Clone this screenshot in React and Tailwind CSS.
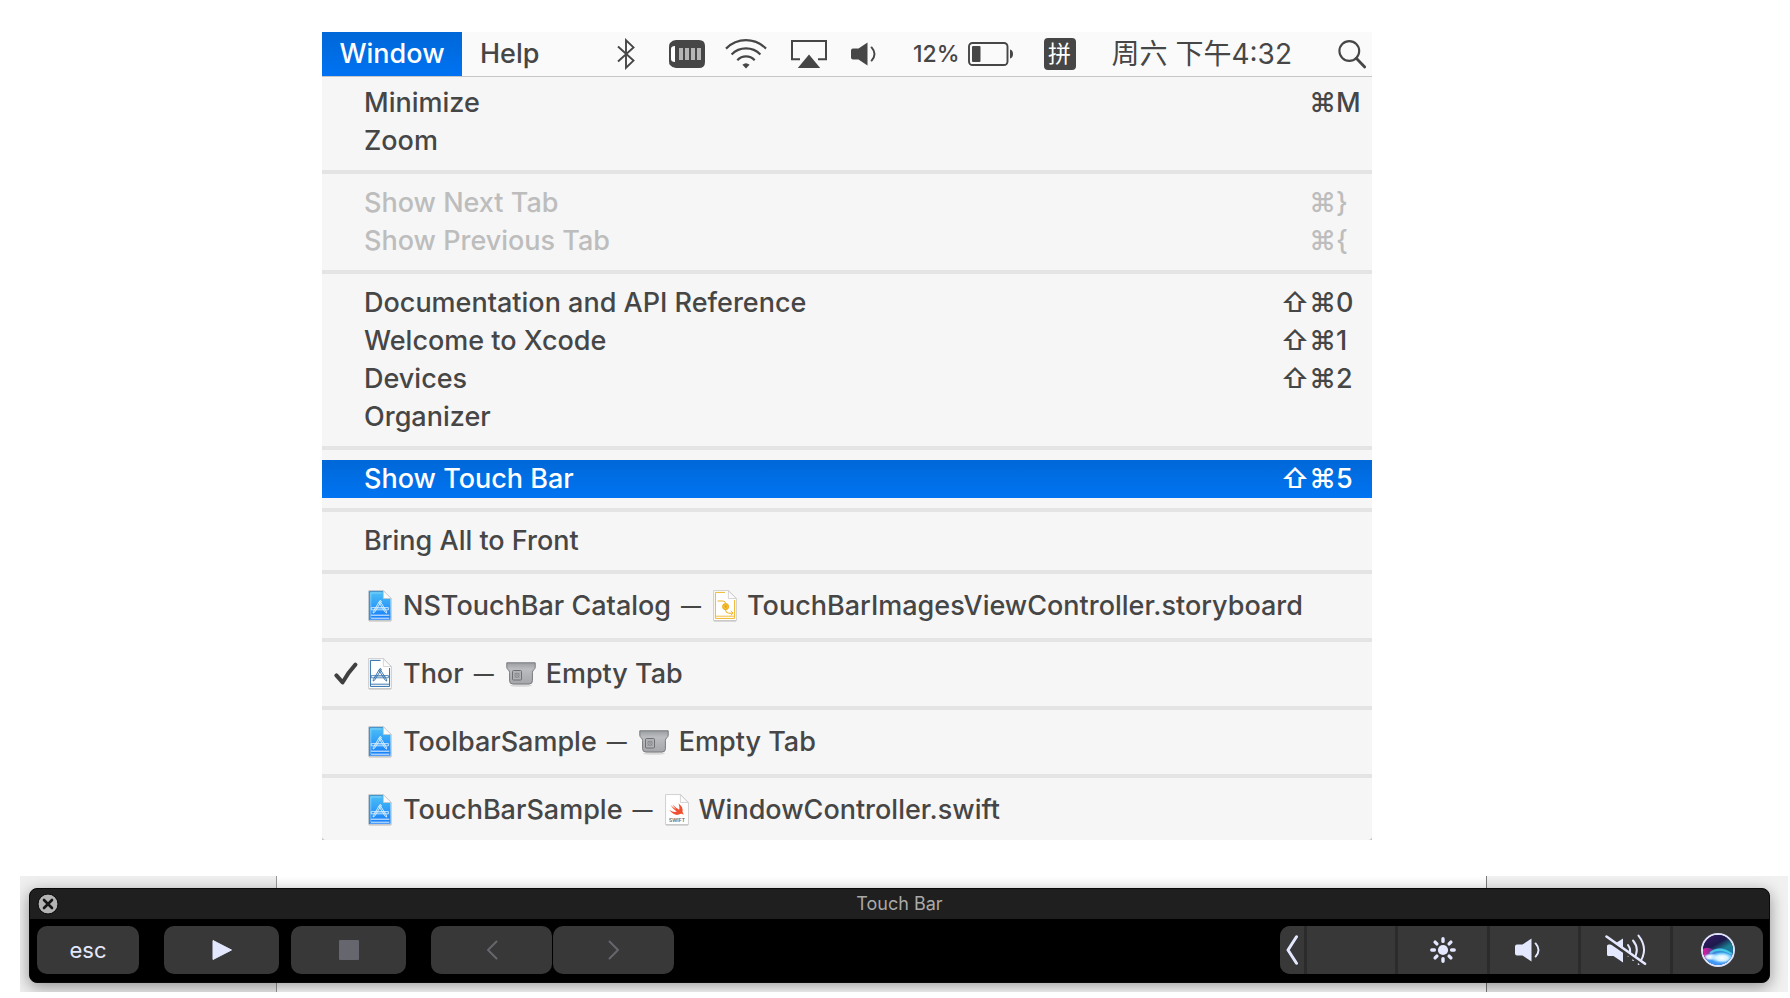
import React, { useState } from 'react';

const DocShape = ({ children, fill = '#ffffff' }) => (
  <svg width="24" height="32" viewBox="0 0 24 32" className="shrink-0" aria-hidden="true">
    <path d="M1 1h14.5L23 8.500V31H1z" fill="#000" opacity=".22" transform="translate(0 .6)" />
    <path d="M.6.6h15L23.400 8.400V30.600H.6z" fill="#fff" stroke="#bcbcbc" strokeWidth=".7" />
    <path d="M1.400 1.400h14L22.600 8.600V29.800H1.400z" fill={fill} />
    {children}
    <path d="M15.400 .8v7.700H23.200z" fill="#fbfbfb" stroke="#c6c6c6" strokeWidth=".7" strokeLinejoin="round" />
  </svg>
);

// the crossed pencil, brush and ruler
const Tools = ({ color }) => (
  <g stroke={color} fill="none" strokeLinecap="round" strokeLinejoin="round">
    <path d="M11.800 10.800L5.400 21.400l-.3 1.600 1.500-.8L13.200 11.600z" strokeWidth=".9" />
    <path d="M12.400 11.800l6 9.400.3 1.900-1.600-1.100-6-9.400z" strokeWidth=".9" />
    <path d="M3.600 17.600h16.800v2.200H3.600z" strokeWidth=".8" />
    <path d="M6.500 18.700h11" strokeWidth=".6" opacity=".7" />
  </g>
);

const ProjectIcon = () => (
  <DocShape fill="url(#projectBlue)">
    <defs>
      <linearGradient id="projectBlue" x1="0" y1="0" x2="0" y2="1">
        <stop offset="0" stopColor="#4cc0f6" />
        <stop offset="1" stopColor="#147cfa" />
      </linearGradient>
    </defs>
    <path d="M1.400 30V1.400h14" fill="none" stroke="#2c86c4" strokeWidth=".9" />
    <path d="M2.800 25.200h18.600M2.800 28.200h18.600" stroke="#fff" strokeWidth=".9" />
    <path d="M2.800 28V3h10.500" fill="none" stroke="#bfe4fb" strokeWidth=".5" />
    <Tools color="#e2f4ff" />
  </DocShape>
);

const WhiteProjectIcon = () => (
  <DocShape>
    <path d="M12.500 2.400H2.400v26h19.200V10" fill="none" stroke="#2a6ca8" strokeWidth="1" />
    <path d="M2.600 26.200h18.800" stroke="#2a6ca8" strokeWidth=".9" />
    <Tools color="#2f6fa9" />
  </DocShape>
);

const StoryboardIcon = () => (
  <DocShape>
    <path d="M12 2.400H2.400v26h19.200V10" fill="none" stroke="#f0b72c" strokeWidth="1" />
    <path d="M2.600 26.200h18.800" stroke="#f0b72c" strokeWidth=".9" />
    <path d="M4.500 11h5.500q2.400 0 2.600 2.500v6.500q.2 3.200 3.200 3.200h4M17.800 21l2.300 2.200-2.300 2.200" fill="none" stroke="#edb021" strokeWidth="1" />
    <circle cx="12.600" cy="16.600" r="3.100" fill="#f5bf2f" stroke="#e3a413" strokeWidth=".8" />
    <circle cx="12.600" cy="16.600" r="1" fill="#dd9b10" />
  </DocShape>
);

const SwiftIcon = () => (
  <DocShape>
    <path
      d="M13.600 9.400c3.300 2.300 4.700 5.600 3.900 8.500 1.200 1.500 1 3.100.7 3-.9-1.500-2.100-1.200-2.900-.8-3.400 1.800-7.900.5-10.900-4 3 2 5.700 2.400 7.400 1.500-2.600-1.800-5-4.300-6.400-6.800 2 1.900 4.200 3.600 5.900 4.600-1.400-1.400-2.900-3.300-3.900-4.900 2.200 2 4.900 4.200 6.800 5.200.6-2-.1-4.400-.6-6.300z"
      fill="#f0502f"
    />
    <text x="12" y="28.400" textAnchor="middle" fontSize="5" fontWeight="600" fill="#666" fontFamily="Inter, sans-serif">SWIFT</text>
  </DocShape>
);

const EmptyTabIcon = () => (
  <svg width="30" height="28" viewBox="0 0 30 28" className="shrink-0" aria-hidden="true">
    <defs>
      <linearGradient id="tabMetal" x1="0" y1="0" x2="0" y2="1">
        <stop offset="0" stopColor="#9b9da1" />
        <stop offset=".3" stopColor="#bbbdc1" />
        <stop offset="1" stopColor="#a4a6aa" />
      </linearGradient>
    </defs>
    <ellipse cx="15" cy="25.400" rx="11" ry="1.400" fill="#000" opacity=".12" />
    <path
      d="M.8 2.800h28.400v4.200q0 1.800-1.400 2.800t-1.400 2.800v8.200q0 3.200-3.200 3.200H6.800q-3.200 0-3.200-3.200v-8.200q0-1.800-1.400-2.800T.8 7z"
      fill="url(#tabMetal)"
      stroke="#77797d"
      strokeWidth="1"
    />
    <rect x="6.500" y="10.500" width="9" height="9.500" rx="1" fill="#b0b2b5" stroke="#6d6f72" strokeWidth="1" />
    <path d="M8.500 12.800l5 5M13.500 12.800l-5 5" stroke="#85878a" strokeWidth=".7" />
    <circle cx="11" cy="15.300" r="2.200" fill="none" stroke="#77797c" strokeWidth=".7" />
  </svg>
);

const CheckIcon = () => (
  <svg width="24" height="24" viewBox="0 0 24 24" className="shrink-0" aria-label="Active">
    <path d="M2.400 13.400L8.600 20.400Q14 10.500 21.400 2.600" fill="none" stroke="#404040" strokeWidth="4" strokeLinecap="round" strokeLinejoin="round" />
  </svg>
);

const BluetoothIcon = () => (
  <svg width="18" height="32" viewBox="0 0 18 32" aria-hidden="true">
    <path d="M1 8.500L16.500 22.600 9 29.800V2.200l7.500 7.200L1 23.500" fill="none" stroke="#464646" strokeWidth="1.900" strokeLinejoin="miter" />
  </svg>
);

const MemoryIcon = () => (
  <svg width="36" height="28" viewBox="0 0 36 28" aria-hidden="true">
    <path d="M7 0h23q6 0 6 6v16q0 6-6 6H7q-3.500 0-6-3Q0 24 0 21V7q0-3 1-4 2.500-3 6-3z" fill="#464646" />
    <path d="M6 6v16q-4 0-4-3V9q0-3 4-3z" fill="#fff" />
    <path d="M10 8h4v12h-4zM16 8h4v12h-4zM22 8h4v12h-4zM28 8h4v12h-4z" fill="#b5b5b5" />
  </svg>
);

const WifiIcon = () => (
  <svg width="42" height="30" viewBox="0 0 42 30" aria-hidden="true">
    <g fill="none" stroke="#464646" strokeWidth="2.200">
      <path d="M1 9.600Q9.500 1.200 21 1.200T41 9.600" />
      <path d="M6.600 15.400Q12.500 9.400 21 9.400T35.400 15.400" />
      <path d="M12.300 21.200Q16 17.400 21 17.400T29.700 21.200" />
    </g>
    <path d="M17.400 25.800q3.600-3 7.200 0L21 29.400z" fill="#464646" />
  </svg>
);

const AirplayIcon = () => (
  <svg width="36" height="28" viewBox="0 0 36 28" aria-hidden="true">
    <path d="M9 19.200H1V1h34v18.200h-8" fill="none" stroke="#464646" strokeWidth="2" />
    <path d="M18 14.600L29.200 28H6.800z" fill="#464646" />
  </svg>
);

const SpeakerIcon = ({ color = '#464646' }) => (
  <svg width="26" height="24" viewBox="0 0 26 24" aria-hidden="true">
    <path d="M2 6.500h5.500L16.500.5v23l-9-6H2q-2 0-2-2v-7q0-2 2-2z" fill={color} />
    <path d="M20.600 5.400q5.800 6.600 0 13.200" fill="none" stroke={color} strokeWidth="1.900" strokeLinecap="round" />
  </svg>
);

const BatteryIcon = () => (
  <svg width="46" height="24" viewBox="0 0 46 24" aria-hidden="true">
    <rect x="1" y="1" width="38.500" height="22" rx="3.500" fill="none" stroke="#464646" strokeWidth="1.900" />
    <rect x="4" y="4" width="8.500" height="16" rx="1" fill="#464646" />
    <path d="M42 7.500q3 .8 3 4.500t-3 4.500z" fill="#464646" />
  </svg>
);

const SearchIcon = () => (
  <svg width="28" height="30" viewBox="0 0 28 30" aria-hidden="true">
    <circle cx="11.300" cy="12" r="9.900" fill="none" stroke="#464646" strokeWidth="2.100" />
    <path d="M18.300 19.200l8.400 8.800" stroke="#464646" strokeWidth="2.800" strokeLinecap="round" />
  </svg>
);

const CloseIcon = () => (
  <svg width="22" height="22" viewBox="0 0 22 22" aria-hidden="true">
    <circle cx="11" cy="11" r="10" fill="#b3b3b3" stroke="#0b0b0b" strokeWidth="1" />
    <path d="M7 7l8 8M15 7l-8 8" stroke="#151515" strokeWidth="2.600" strokeLinecap="round" />
  </svg>
);

const PlayIcon = () => (
  <svg width="20" height="20" viewBox="0 0 20 20" aria-hidden="true">
    <path d="M1 .5L19.500 10 1 19.500z" fill="#e4e8ff" stroke="#e4e8ff" strokeWidth="1" strokeLinejoin="round" />
  </svg>
);

const StopIcon = () => (
  <svg width="20" height="20" viewBox="0 0 20 20" aria-hidden="true">
    <rect width="20" height="20" rx="1" fill="#65666e" />
  </svg>
);

const ChevronIcon = ({ d, color, width = 2, w = 12, h = 20 }) => (
  <svg width={w} height={h} viewBox={`0 0 ${w} ${h}`} aria-hidden="true">
    <path d={d} fill="none" stroke={color} strokeWidth={width} strokeLinecap="round" strokeLinejoin="round" />
  </svg>
);

const BrightnessIcon = () => (
  <svg width="28" height="28" viewBox="0 0 28 28" aria-hidden="true">
    <circle cx="14" cy="14" r="5.100" fill="#e4e8ff" />
    <path
      d="M14 2.800v2.600M14 22.600v2.600M2.800 14h2.600M22.600 14h2.600M6.100 6.100l1.800 1.800M20.100 20.100l1.800 1.800M6.100 21.900l1.800-1.800M20.100 7.900l1.800-1.800"
      stroke="#e4e8ff"
      strokeWidth="3.400"
      strokeLinecap="round"
    />
  </svg>
);

const MuteIcon = () => (
  <svg width="42" height="34" viewBox="0 0 42 34" aria-hidden="true">
    <path d="M3.500 11.500h5l9.500-6v24l-9.500-6.500h-5q-1.500 0-1.500-1.500v-8.500q0-1.500 1.500-1.500z" fill="#e4e8ff" />
    <g fill="none" stroke="#e4e8ff" strokeWidth="2" strokeLinecap="round">
      <path d="M23 12q4 5.500.5 11" />
      <path d="M28 7.500q7.500 9 .2 19.500" />
      <path d="M33.500 2.600q11 14 .2 28.400" />
    </g>
    <path d="M1 5.200l40 27.600" stroke="#383838" strokeWidth="3" transform="translate(0 1)" />
    <path d="M1.500 3.500L40 30.800" stroke="#e4e8ff" strokeWidth="2.600" strokeLinecap="round" />
  </svg>
);

const SiriIcon = () => (
  <svg width="34" height="34" viewBox="0 0 34 34" aria-hidden="true">
    <defs>
      <clipPath id="siriClip"><circle cx="17" cy="17" r="15" /></clipPath>
      <linearGradient id="siriBase" x1=".2" y1="0" x2=".8" y2="1">
        <stop offset="0" stopColor="#3a1a66" />
        <stop offset=".35" stopColor="#1d1a4d" />
        <stop offset=".55" stopColor="#1a7f8f" />
        <stop offset="1" stopColor="#1b6fd8" />
      </linearGradient>
      <linearGradient id="siriPink" x1="0" y1="0" x2="1" y2="0">
        <stop offset="0" stopColor="#e8189c" />
        <stop offset="1" stopColor="#8a3fe0" stopOpacity=".3" />
      </linearGradient>
      <radialGradient id="siriGlow">
        <stop offset="0" stopColor="#fff" />
        <stop offset=".5" stopColor="#dff6ff" stopOpacity=".9" />
        <stop offset="1" stopColor="#59b8ff" stopOpacity="0" />
      </radialGradient>
    </defs>
    <circle cx="17" cy="17" r="16" fill="#0d1030" stroke="#dfe3fa" strokeWidth="2" />
    <g clipPath="url(#siriClip)">
      <rect width="34" height="34" fill="url(#siriBase)" />
      <path d="M2 16q8-4 15 6l-2 5H2z" fill="url(#siriPink)" />
      <path d="M6 24q5-9 14-9 8 1 12 9v9H6z" fill="#4a9dff" opacity=".65" />
      <path d="M9 20q9-7 22 1" fill="none" stroke="#4fe6e8" strokeWidth="2" opacity=".7" />
      <path d="M12 22q10-6 20 2v4H12z" fill="#5cc8ff" opacity=".8" />
      <path d="M2 25q15 6 30 0v9H2z" fill="#3f97f7" />
      <ellipse cx="10" cy="24" rx="9" ry="4" fill="url(#siriGlow)" />
      <ellipse cx="21" cy="25" rx="12" ry="6" fill="url(#siriGlow)" />
    </g>
  </svg>
);

const SECTIONS = [
  [
    { label: 'Minimize', mods: '⌘', char: 'M' },
    { label: 'Zoom' },
  ],
  [
    { label: 'Show Next Tab', mods: '⌘', char: '}', disabled: true },
    { label: 'Show Previous Tab', mods: '⌘', char: '{', disabled: true },
  ],
  [
    { label: 'Documentation and API Reference', mods: '⇧⌘', char: '0' },
    { label: 'Welcome to Xcode', mods: '⇧⌘', char: '1' },
    { label: 'Devices', mods: '⇧⌘', char: '2' },
    { label: 'Organizer' },
  ],
  [{ label: 'Show Touch Bar', mods: '⇧⌘', char: '5' }],
  [{ label: 'Bring All to Front' }],
];

const WINDOWS = [
  { project: 'NSTouchBar Catalog', Icon: ProjectIcon, file: 'TouchBarImagesViewController.storyboard', FileIcon: StoryboardIcon },
  { project: 'Thor', Icon: WhiteProjectIcon, file: 'Empty Tab', FileIcon: EmptyTabIcon, active: true },
  { project: 'ToolbarSample', Icon: ProjectIcon, file: 'Empty Tab', FileIcon: EmptyTabIcon },
  { project: 'TouchBarSample', Icon: ProjectIcon, file: 'WindowController.swift', FileIcon: SwiftIcon },
];

function MenuBar() {
  return (
    <header className="flex h-[45px] items-stretch border-b border-[#c6c6c6] bg-[#fafafa]">
      <button className="w-[140px] bg-linear-to-b from-[#0068d8] to-[#0072f2] text-white">Window</button>
      <button className="px-[18px]">Help</button>
      <div className="ml-auto flex items-center pr-1.5">
        <button aria-label="Bluetooth"><BluetoothIcon /></button>
        <button aria-label="Memory" className="ml-[34px]"><MemoryIcon /></button>
        <button aria-label="Wi-Fi" className="ml-5"><WifiIcon /></button>
        <button aria-label="AirPlay" className="ml-6"><AirplayIcon /></button>
        <button aria-label="Volume" className="ml-6"><SpeakerIcon /></button>
        <button aria-label="Battery" className="ml-9 flex items-center gap-2 text-[23px]">
          12% <BatteryIcon />
        </button>
        <button className="ml-[30px] h-8 w-8 rounded bg-[#464646] text-[23px] leading-8 font-normal text-white">拼</button>
        <time className="ml-9 text-[28px] font-normal">周六 下午4:32</time>
        <button aria-label="Search" className="ml-[46px]"><SearchIcon /></button>
      </div>
    </header>
  );
}

function MenuItem({ item, selected, onSelect }) {
  const tone = item.disabled
    ? 'text-[#bdbdbd]'
    : selected
      ? 'bg-linear-to-b from-[#0068d8] to-[#0074f2] text-white'
      : '';

  return (
    <button
      role="menuitem"
      disabled={item.disabled}
      onClick={() => onSelect(item.label)}
      className={`flex h-[38px] w-full items-center pr-2.5 pl-[42px] text-left ${tone}`}
    >
      <span className="flex-1">{item.label}</span>
      {item.char && (
        <>
          <span>{item.mods}</span>
          <span className="w-[26px]">{item.char}</span>
        </>
      )}
    </button>
  );
}

function WindowItem({ win }) {
  const { Icon, FileIcon } = win;
  return (
    <button role="menuitem" className="flex h-11 w-full items-center gap-2.5 pl-3 text-left">
      <span className="flex w-6 shrink-0">{win.active && <CheckIcon />}</span>
      <Icon />
      <span className="pl-px">{win.project}</span>
      <span className="pr-0.5 text-[20px]">—</span>
      <FileIcon />
      <span>{win.file}</span>
    </button>
  );
}

function WindowMenu() {
  const [selected, setSelected] = useState('Show Touch Bar');
  return (
    <div className="bg-[#c4c4c4]">
      <div role="menu" className="rounded-b bg-[#f6f6f6] pt-[7px] pb-2">
        {SECTIONS.map((items, i) => (
          <div key={i} className="mb-2.5">
            {items.map(item => (
              <MenuItem key={item.label} item={item} selected={item.label === selected} onSelect={setSelected} />
            ))}
            <hr className="mt-2.5 border-t-4 border-[#e4e4e4]" />
          </div>
        ))}
        {WINDOWS.map((win, i) => (
          <div key={win.project}>
            {i > 0 && <hr className="my-2.5 border-t-4 border-[#e4e4e4]" />}
            <WindowItem win={win} />
          </div>
        ))}
      </div>
    </div>
  );
}

const key = 'flex h-12 items-center justify-center bg-[#383838]';

function TouchBar() {
  return (
    <div className="overflow-hidden rounded-lg border border-[#0a0a0a] bg-black font-normal shadow-[0_4px_16px_rgba(0,0,0,0.4)]">
      <div className="grid h-[30px] grid-cols-[1fr_auto_1fr] items-center bg-[#1f1f1f] px-[7px] leading-[30px]">
        <button aria-label="Close" className="w-fit"><CloseIcon /></button>
        <span className="text-[18px] text-[#a9a9a9]">Touch Bar</span>
      </div>
      <div className="flex pt-[7px] pr-1.5 pb-2 pl-[7px]">
        <button className={`${key} w-[102px] rounded-[10px] text-[22px] text-[#e4e8ff]`}>esc</button>
        <button aria-label="Play" className={`${key} ml-[25px] w-[115px] rounded-[10px]`}><PlayIcon /></button>
        <button aria-label="Stop" className={`${key} ml-3 w-[115px] rounded-[10px]`}><StopIcon /></button>
        <button aria-label="Back" className={`${key} ml-[25px] w-[121px] rounded-[10px]`}>
          <ChevronIcon d="M10.500 1.500L2 10l8.500 8.500" color="#66676e" />
        </button>
        <button aria-label="Forward" className={`${key} ml-px w-[121px] rounded-[10px]`}>
          <ChevronIcon d="M1.500 1.500L10 10l-8.500 8.500" color="#66676e" />
        </button>

        <div className="ml-auto flex gap-[3px] overflow-hidden rounded-[10px] bg-[#2b2b2b]">
          <button aria-label="Expand" className={`${key} w-6`}>
            <ChevronIcon d="M10.500 1.800L2 15l8.500 13.200" color="#e4e8ff" width={3} h={30} />
          </button>
          <div className={`${key} w-[88px]`} />
          <button aria-label="Brightness" className={`${key} w-[89px]`}><BrightnessIcon /></button>
          <button aria-label="Volume" className={`${key} w-[88px] pr-3`}>
            <SpeakerIcon color="#e4e8ff" />
          </button>
          <button aria-label="Mute" className={`${key} w-[89px]`}><MuteIcon /></button>
          <button aria-label="Siri" className={`${key} w-[90px]`}><SiriIcon /></button>
        </div>
      </div>
    </div>
  );
}

export default function App() {
  return (
    <div className="min-h-screen bg-white pt-8 font-['Inter','Noto_Sans_CJK_SC',sans-serif] text-[27px] leading-[38px] font-[450] text-[#464646]">
      <div className="mr-[418px] ml-[322px]">
        <MenuBar />
        <WindowMenu />
      </div>

      <section className="mt-9 mr-0.5 ml-5 grid overflow-hidden">
        {/* edges of the window behind the bar */}
        <div className="col-start-1 row-start-1 flex">
          <div className="w-[257px] border-r border-[#9a9a9a] bg-[#efefef]" />
          <div className="flex-1" />
          <div className="w-[302px] border-l border-[#7c7c7c] bg-[#f1f1f1]" />
        </div>
        <div className="col-start-1 row-start-1 min-w-0 pt-3 pr-[18px] pb-[9px] pl-[9px]">
          <TouchBar />
        </div>
      </section>
    </div>
  );
}
